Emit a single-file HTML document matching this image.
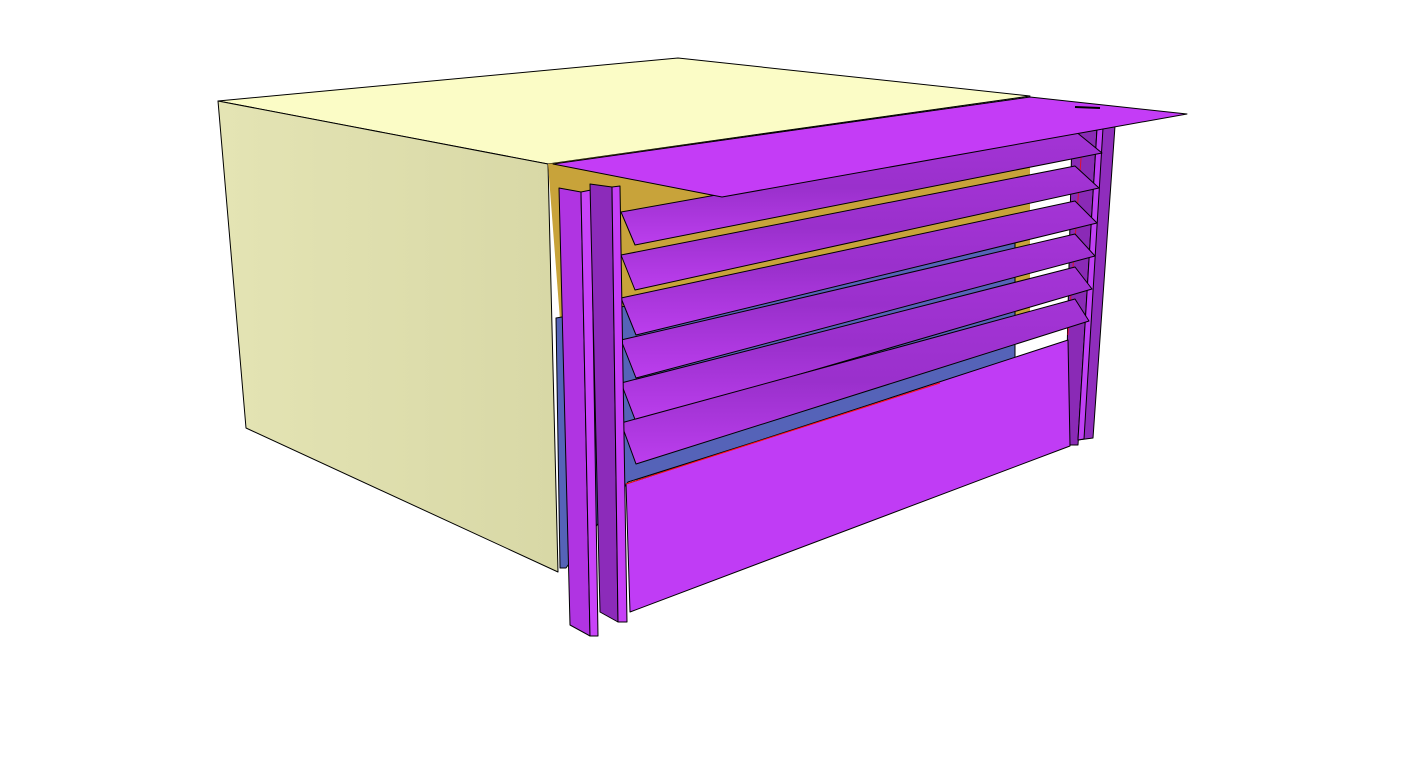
<!DOCTYPE html>
<html><head><meta charset="utf-8"><style>
html,body{margin:0;padding:0;background:#fff;width:1406px;height:768px;overflow:hidden}
svg{display:block}
</style></head><body>
<svg width="1406" height="768" viewBox="0 0 1406 768" xmlns="http://www.w3.org/2000/svg">
<defs>
<linearGradient id="lf" x1="0" y1="0" x2="1" y2="0"><stop offset="0" stop-color="#e4e4b4"/><stop offset="1" stop-color="#d8d8a6"/></linearGradient>
<linearGradient id="sl" x1="0" y1="0" x2="0" y2="1"><stop offset="0" stop-color="#a434d6"/><stop offset="0.5" stop-color="#9a30cc"/><stop offset="1" stop-color="#bc3eee"/></linearGradient>
</defs>
<g stroke="#000" stroke-width="1" stroke-linejoin="round">
<polygon points="218,101 678,58 1030,96 548,164" fill="#fbfcc6"/>
<polygon points="218,101 548,164 558,572 246,428" fill="url(#lf)"/>
<polygon points="548,164 1030,97 1030,340 560,320" fill="#c8a33a" stroke="none"/>
<polygon points="1015,330 1075,320 1075,350 1015,360" fill="#fff" stroke="none"/>
<polygon points="1030,97 1078,105 1078,135 1030,150" fill="#fff" stroke="none"/>
<polygon points="556,318 1015,240 1015,360 628,482 566,568 560,568" fill="#5563b8"/>
<polygon points="1072,132 1097,130 1078,445 1065,445" fill="#8a2ab6"/>
<polygon points="1097,129 1115,126 1093,438 1078,440" fill="#8f2dbc"/>
<polygon points="1097,129 1103,128 1084,439 1078,440" fill="#c040f4"/>
<line x1="1082" y1="145" x2="1068" y2="335" stroke="#e01030"/>
<polygon points="626,484 1068,340 1070,446 630,612" fill="#c03cf5"/>
<line x1="626" y1="484" x2="940" y2="383" stroke="#ff1010"/>
<polygon points="621,212 1075,131 1102,153 635,245" fill="url(#sl)"/>
<polygon points="621,255 1075,166 1099,188 635,290" fill="url(#sl)"/>
<polygon points="621,298 1075,201 1097,223 636,335" fill="url(#sl)"/>
<polygon points="621,340 1075,234 1095,256 636,378" fill="url(#sl)"/>
<polygon points="621,383 1075,267 1092,289 636,422" fill="url(#sl)"/>
<polygon points="621,423 1075,299 1089,321 636,464" fill="url(#sl)"/>
<polygon points="553,164 1030,97 1187,114 722,197" fill="#c43cf6"/>
<line x1="1075" y1="107" x2="1100" y2="108" stroke-width="2"/>
<polygon points="559,188 581,192 590,636 570,625" fill="#b034e2"/>
<polygon points="581,192 591,190 598,636 590,636" fill="#c844f8"/>
<polygon points="590,184 612,187 618,622 600,612" fill="#8c2bba"/>
<polygon points="612,187 620,186 627,622 618,622" fill="#c640f6"/>
</g>
</svg>
</body></html>
